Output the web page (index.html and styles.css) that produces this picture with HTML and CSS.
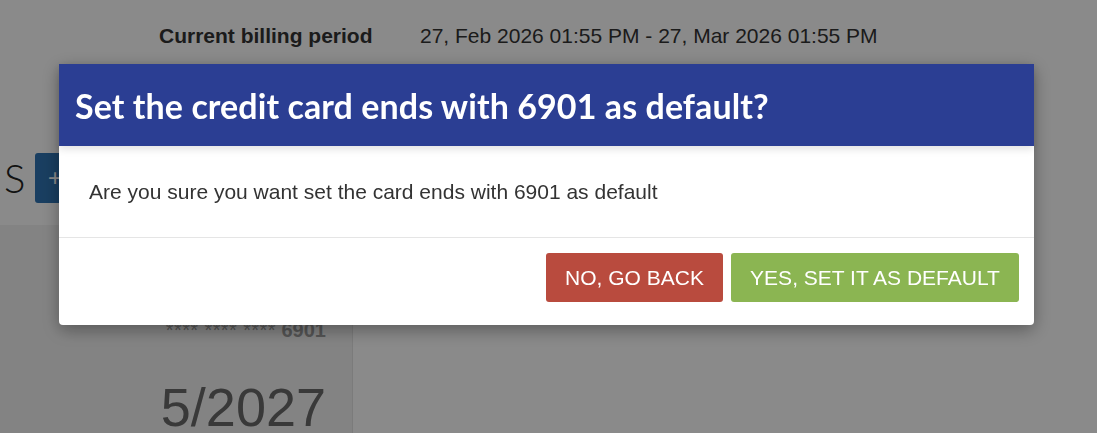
FILE: index.html
```html
<!DOCTYPE html>
<html lang="en">
<head>
<meta charset="utf-8">
<title>Set default card</title>
<link rel="stylesheet" href="styles.css">
</head>
<body>
<div class="page">
  <div class="billing-row">
    <span class="billing-label">Current billing period</span>
    <span class="billing-value">27, Feb 2026 01:55 PM - 27, Mar 2026 01:55 PM</span>
  </div>
  <div class="section-head">
    <span class="section-title">S</span>
    <button class="add-btn">+</button>
  </div>
  <div class="cards">
    <div class="card-panel">
      <div class="card-number"><span class="stars">**** **** ****</span> <b>6901</b></div>
      <div class="card-exp">5/2027</div>
    </div>
  </div>
</div>

<div class="backdrop"></div>

<div class="modal" role="dialog">
  <div class="modal-header">
    <h2 class="modal-title">Set the credit card ends with 6901 as default?</h2>
  </div>
  <div class="modal-body">
    <p>Are you sure you want set the card ends with 6901 as default</p>
  </div>
  <div class="modal-footer">
    <button class="btn btn-danger">NO, GO BACK</button>
    <button class="btn btn-success">YES, SET IT AS DEFAULT</button>
  </div>
</div>
</body>
</html>
```

FILE: styles.css
```css
html, body {
  margin: 0;
  padding: 0;
  height: 100%;
  overflow: hidden;
}
body {
  background: #fff;
  font-family: "Liberation Sans", Arial, sans-serif;
  color: #333;
}
.page {
  display: flex;
  flex-direction: column;
  height: 100vh;
  overflow: hidden;
}
.billing-row {
  display: flex;
  align-items: center;
  padding: 24px 0 0 159px;
  height: 24px;
  font-size: 21px;
}
.billing-label {
  font-weight: bold;
  width: 261px;
  color: #333;
}
.billing-value {
  color: #333;
}
.section-head {
  display: flex;
  align-items: center;
  margin-top: 105px;
  padding-left: 4px;
  height: 50px;
}
.section-title {
  font-family: "Lato", sans-serif;
  font-weight: 300;
  font-size: 40px;
  color: #222;
  width: 31px;
}
.add-btn {
  width: 40px;
  height: 50px;
  border: none;
  border-radius: 3px;
  background: #2f74b3;
  color: #fff;
  font-size: 24px;
  padding: 0;
}
.cards {
  display: flex;
  margin-top: 22px;
  flex: 1;
  min-height: 0;
}
.card-panel {
  width: 326px;
  padding-right: 26px;
  background: #f3f3f3;
  border-right: 1px solid #e4e4e4;
  display: flex;
  flex-direction: column;
  align-items: flex-end;
  padding-top: 94px;
}
.card-number {
  font-size: 20px;
  line-height: 23px;
  color: #9d9d9d;
}
.card-number .stars {
  letter-spacing: 0.4px;
}
.card-exp {
  margin-top: 38px;
  font-size: 54px;
  color: #6a6a6a;
  line-height: 1;
}
.backdrop {
  position: fixed;
  inset: 0;
  background: rgba(0, 0, 0, 0.46);
}
.modal {
  position: fixed;
  top: 64px;
  left: 59px;
  width: 975px;
  background: #fff;
  border-radius: 0 0 4px 4px;
  box-shadow: 0 5px 18px rgba(0, 0, 0, 0.35);
}
.modal-header {
  background: #2b3e93;
  height: 82px;
  display: flex;
  align-items: center;
  padding-left: 16px;
  box-shadow: 0 3px 8px rgba(0, 0, 0, 0.12);
  position: relative;
}
.modal-title {
  margin: 0;
  color: #fff;
  font-family: "Lato", sans-serif;
  font-weight: 700;
  font-size: 34px;
  letter-spacing: 0.08px;
}
.modal-body {
  height: 91px;
  display: flex;
  align-items: center;
  padding-left: 30px;
  border-bottom: 1px solid #e5e5e5;
}
.modal-body p {
  margin: 0;
  font-size: 21px;
  color: #333;
}
.modal-footer {
  display: flex;
  justify-content: flex-end;
  gap: 8px;
  padding: 15px 15px 23px;
}
.btn {
  height: 49px;
  border: none;
  border-radius: 3px;
  color: #fff;
  font-family: "Liberation Sans", Arial, sans-serif;
  font-size: 21px;
  padding: 0 10px;
}
.btn-danger {
  background: #b94b3e;
  width: 177px;
}
.btn-success {
  background: #8bb552;
  width: 288px;
}
```
